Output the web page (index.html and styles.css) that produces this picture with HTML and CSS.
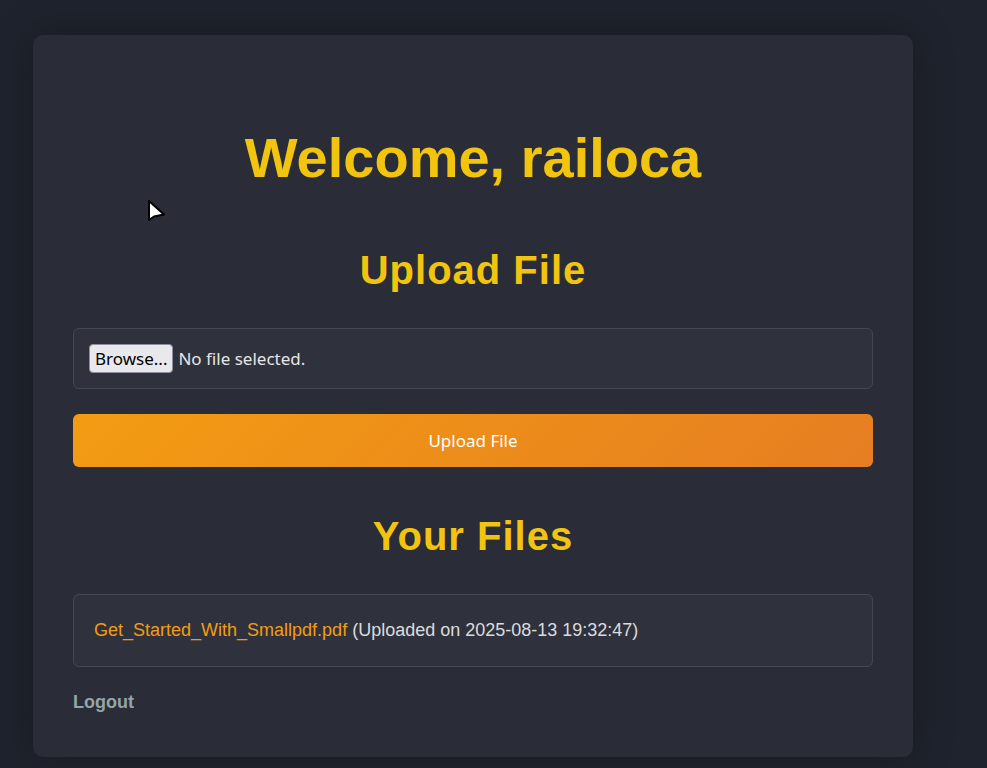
FILE: index.html
```html
<!DOCTYPE html>
<html>
<head>
<meta charset="utf-8">
<title>Dashboard</title>
<link rel="stylesheet" href="styles.css">
</head>
<body>
<div class="card">
	<h1 class="welcome">Welcome, railoca</h1>

	<h2 class="section">Upload File</h2>
	<form class="upload" onsubmit="return false">
		<div class="file-box">
			<button type="button" class="browse">Browse...</button>
			<span class="file-name">No file selected.</span>
		</div>
		<button type="submit" class="upload-btn">Upload File</button>
	</form>

	<h2 class="section files-title">Your Files</h2>
	<ul class="files">
		<li><a href="#">Get_Started_With_Smallpdf.pdf</a> (Uploaded on 2025-08-13 19:32:47)</li>
	</ul>

	<a class="logout" href="#">Logout</a>
</div>

<svg class="cursor" width="20" height="26" viewBox="0 0 20 26">
	<path d="M2 2 L2 21 L7 17.5 L17 15.5 Z" fill="#fff" stroke="#000" stroke-width="2" stroke-linejoin="round"/>
</svg>
</body>
</html>
```

FILE: styles.css
```css
*{ box-sizing:border-box;}
body{ margin:0; min-height:768px; background:#1f232d; font-family:"Liberation Sans", Arial, sans-serif; overflow:hidden;}
.card{ width:880px; margin:35px 0 0 33px; padding:40px 40px 44px; background:#2a2c38; border-radius:10px; box-shadow:0 0 40px rgba(0,0,0,0.25);}
.welcome{ margin:51px 0 0; font-size:56px; line-height:64px; letter-spacing:0; text-align:center; color:#f1c40f; font-weight:bold;}
.section{ margin:56px 0 0; font-size:40px; line-height:48px; letter-spacing:1px; text-align:center; color:#f1c40f; font-weight:bold;}
.files-title{ margin-top:45px;}
.upload{ margin:34px 0 0;}
.file-box{ display:flex; align-items:center; gap:5px; padding:15px; background:#2f323d; border:1px solid #464850; border-radius:6px;}
.browse{ height:29px; padding:0 5px; font:17px "Noto Sans", sans-serif; color:#000; background:#e9e9ed; border:1px solid #8f8f9d; border-radius:4px;}
.file-name{ font:17px "Noto Sans", sans-serif; color:#e6e6e6;}
.upload-btn{ display:block; width:100%; height:53px; margin-top:25px; border:0; border-radius:6px; background:linear-gradient(135deg,#f39c12,#e67e22); color:#fff; font:17px "Noto Sans", sans-serif;}
.files{ list-style:none; margin:34px 0 0; padding:0;}
.files li{ padding:25px 20px; line-height:21px; font-size:18px; color:#dcdcdc; background:#2f323d; border:1px solid #464850; border-radius:6px;}
.files a{ color:#f39c12; text-decoration:none;}
.logout{ display:block; margin-top:25px; line-height:21px; font-size:18px; font-weight:bold; color:#95a5a6; text-decoration:none;}
.cursor{ position:absolute; left:147px; top:199px;}
```
